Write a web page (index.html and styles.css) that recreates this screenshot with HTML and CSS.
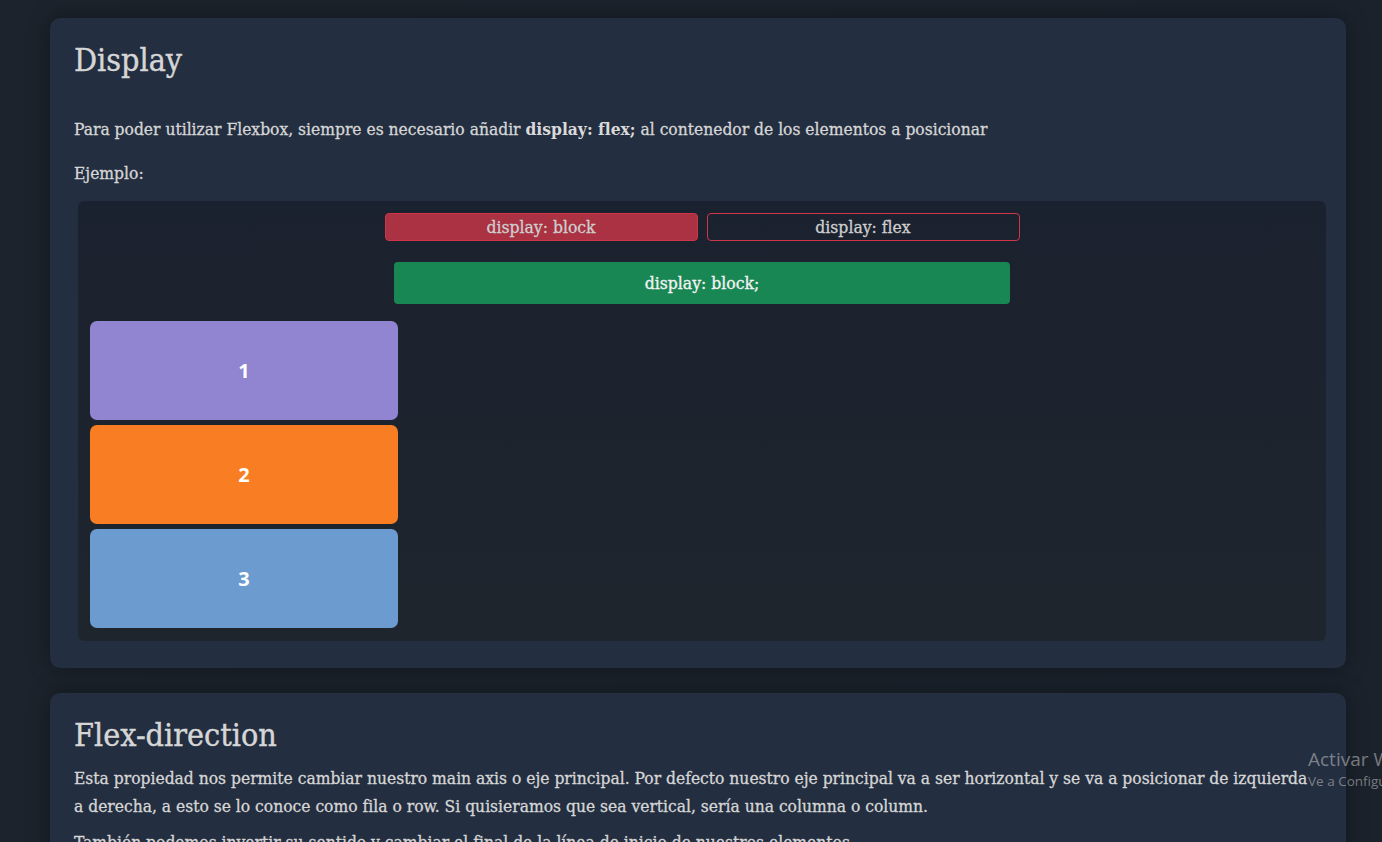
FILE: index.html
```html
<!DOCTYPE html>
<html lang="es">
<head>
<meta charset="utf-8">
<title>Flexbox</title>
<link rel="stylesheet" href="styles.css">
</head>
<body>
<main class="page">
  <section class="card">
    <h2 class="card-title">Display</h2>
    <p class="text">Para poder utilizar Flexbox, siempre es necesario añadir <strong>display: flex;</strong> al contenedor de los elementos a posicionar</p>
    <p class="text before-example">Ejemplo:</p>
    <div class="example">
      <div class="toggles">
        <button class="toggle active">display: block</button>
        <button class="toggle">display: flex</button>
      </div>
      <div class="label-bar">display: block;</div>
      <div class="items">
        <div class="item purple">1</div>
        <div class="item orange">2</div>
        <div class="item blue">3</div>
      </div>
    </div>
  </section>
  <section class="card">
    <h2 class="card-title second">Flex-direction</h2>
    <p class="text tight">Esta propiedad nos permite cambiar nuestro main axis o eje principal. Por defecto nuestro eje principal va a ser horizontal y se va a posicionar de izquierda<br>a derecha, a esto se lo conoce como fila o row. Si quisieramos que sea vertical, sería una columna o column.</p>
    <p class="text">También podemos invertir su sentido y cambiar el final de la línea de inicio de nuestros elementos.</p>
  </section>
</main>
<div class="watermark">
  <div class="wm-title">Activar Windows</div>
  <div class="wm-sub">Ve a Configuración para activar Windows.</div>
</div>
</body>
</html>
```
FILE: styles.css
```css
* { box-sizing: border-box; }
html, body { height: 100%; }
body {
  margin: 0;
  background: linear-gradient(90deg, #1c232c 0%, #1b222c 100%);
  color: #d6d6d6;
  font-family: "DejaVu Serif Condensed", "DejaVu Serif", serif;
  overflow: hidden;
}
.page {
  padding: 18px 36px 0 50px;
  display: flex;
  flex-direction: column;
  gap: 25px;
}
.card {
  background: #232e40;
  border-radius: 10px;
  padding: 22px 24px 27px;
  box-shadow: 0 0 22px rgba(0, 0, 0, 0.35);
}
.card-title {
  margin: 0 0 35px;
  font-size: 32px;
  font-weight: normal;
  line-height: 40px;
  color: #d6d6d6;
  -webkit-text-stroke: 0.4px currentColor;
}
.card-title.second { margin-bottom: 9px; }
.text {
  margin: 0 0 16px;
  font-size: 17.3px;
  line-height: 28px;
  -webkit-text-stroke: 0.3px currentColor;
}
.text.before-example { margin-bottom: 14px; }
.text.tight { margin-bottom: 8px; }
.text strong { font-weight: bold; color: #dadada; -webkit-text-stroke: 0; }
.example {
  margin: 0 -4px 0 4px;
  background: linear-gradient(180deg, #1b222f 0%, #1e252d 100%);
  border-radius: 6px;
  padding: 12px 12px 13px;
  display: flex;
  flex-direction: column;
  align-items: center;
}
.toggles {
  display: flex;
  gap: 9px;
}
.toggle {
  width: 313px;
  height: 28px;
  border: 1px solid #d03448;
  border-radius: 4px;
  background: transparent;
  color: #cfcfcf;
  font-family: inherit;
  font-size: 17.4px;
  padding: 0;
  -webkit-text-stroke: 0.3px currentColor;
}
.toggle.active { background: #aa3243; }
.label-bar {
  margin-top: 21px;
  width: 616px;
  height: 42px;
  border-radius: 4px;
  background: #198754;
  color: #f4f4f4;
  font-size: 17.4px;
  display: flex;
  align-items: center;
  justify-content: center;
  -webkit-text-stroke: 0.3px currentColor;
}
.items {
  align-self: stretch;
  margin-top: 17px;
  display: flex;
  flex-direction: column;
  gap: 5px;
}
.item {
  width: 308px;
  height: 99px;
  border-radius: 7px;
  display: flex;
  align-items: center;
  justify-content: center;
  color: #ffffff;
  font-family: "Open Sans", sans-serif;
  font-weight: bold;
  font-size: 20px;
}
.purple { background: #9184d0; }
.orange { background: #f97d22; }
.blue { background: #6b9bcf; }
.watermark {
  position: absolute;
  left: 1308px;
  top: 746px;
  color: rgba(200, 200, 200, 0.55);
  font-family: "Open Sans", sans-serif;
  white-space: nowrap;
}
.wm-title { font-size: 19px; line-height: 26px; }
.wm-sub { font-size: 13.5px; line-height: 18px; }
```
